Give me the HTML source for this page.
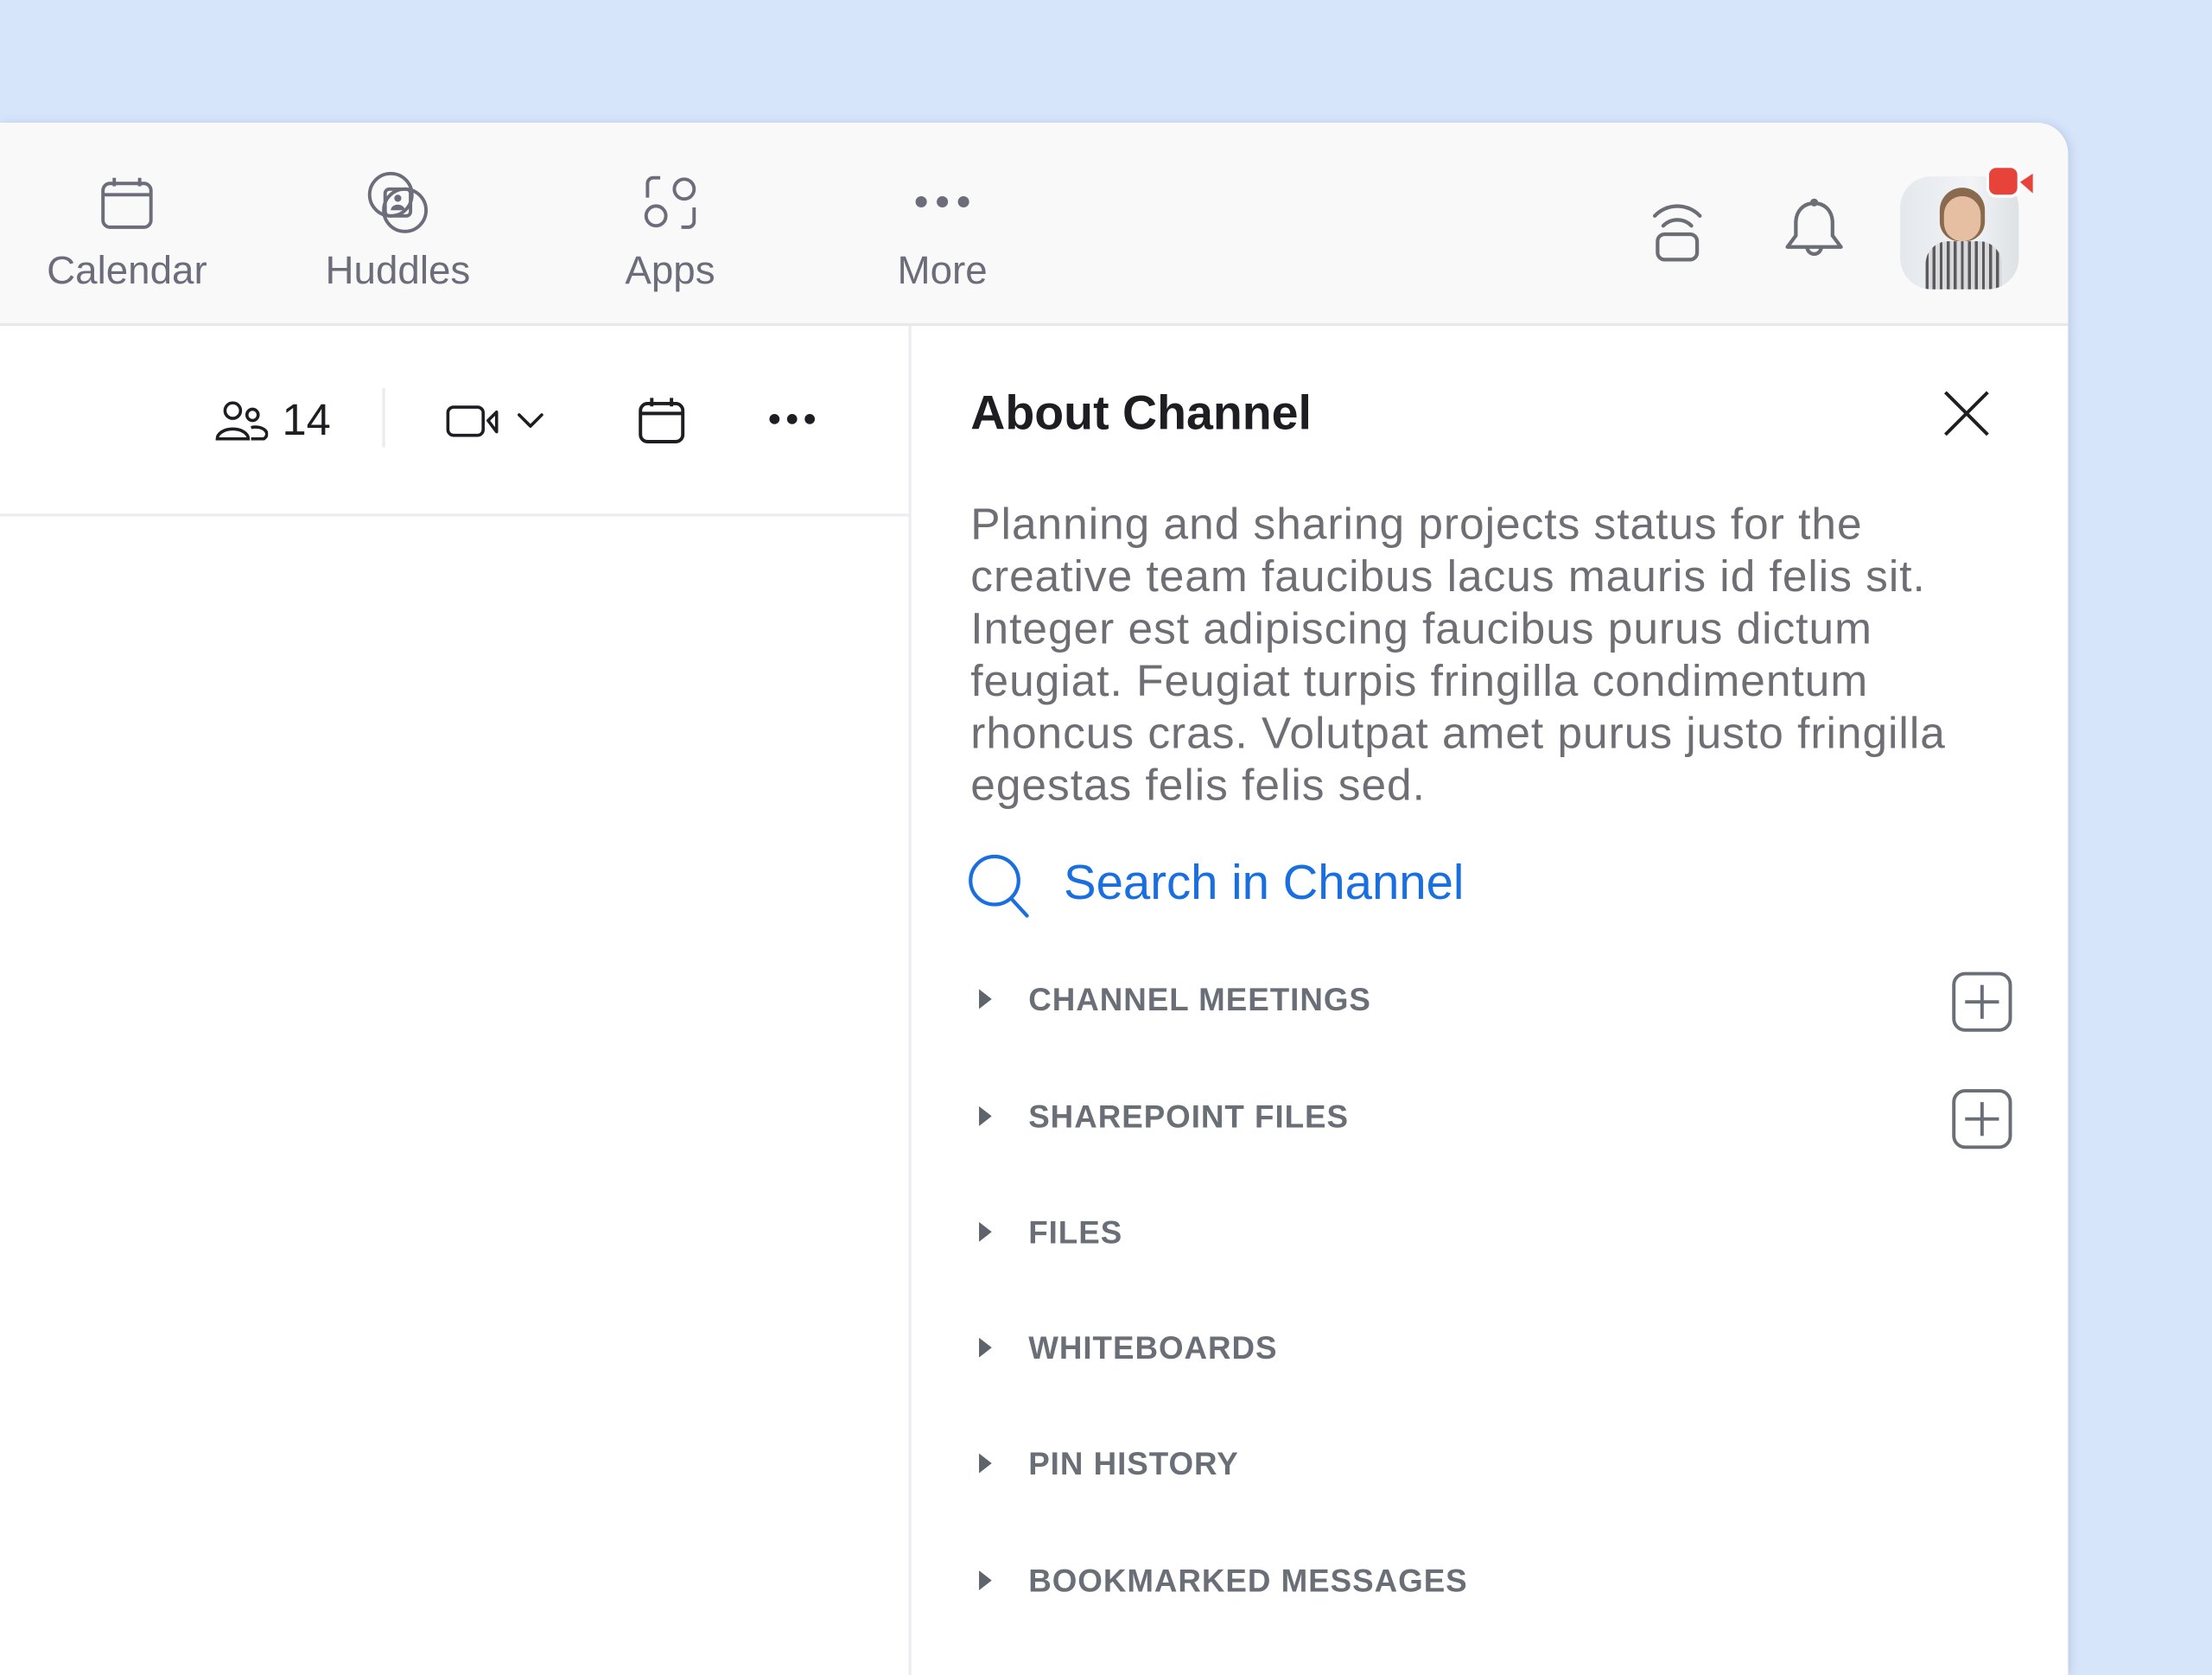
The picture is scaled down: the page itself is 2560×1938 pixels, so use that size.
<!DOCTYPE html>
<html><head><meta charset="utf-8"><style>
html,body{margin:0;padding:0;width:2560px;height:1920px;overflow:hidden;background:#d7e5fb;}
#s{position:absolute;left:0;top:0;width:1568px;height:1176px;transform:scale(1.632653);transform-origin:0 0;font-family:"Liberation Sans",sans-serif;}
.win{position:absolute;left:0;top:87px;width:1466px;height:1100px;background:#fff;border-top-right-radius:22px;overflow:hidden;box-shadow:2px 0 6px rgba(120,140,180,.25);}
.top{position:absolute;left:0;top:0;width:100%;height:142px;background:#f9f9fa;border-bottom:2px solid #e8e8ea;}
.nav{position:absolute;top:89px;width:160px;text-align:center;font-size:28px;color:#6c6c7a;}
.ic{position:absolute;}
.div{position:absolute;left:644px;top:144px;width:2px;height:1000px;background:#ededf0;}
.hl{position:absolute;left:0;top:277px;width:644px;height:2px;background:#ededf0;}
.title{position:absolute;left:688px;top:187px;font-size:34px;font-weight:bold;color:#1d1d22;}
.desc{position:absolute;left:688px;top:266px;font-size:31.5px;line-height:37px;color:#6e6e74;white-space:nowrap;letter-spacing:0.6px;}
.search{position:absolute;left:754px;top:520px;font-size:34.5px;color:#1a6fe0;}
.sec{position:absolute;left:729px;font-size:22.5px;font-weight:bold;color:#6a6e76;letter-spacing:0.6px;}
.tri{position:absolute;left:694px;width:0;height:0;border-left:9px solid #5f636b;border-top:7px solid transparent;border-bottom:7px solid transparent;}
</style></head><body><div id="s">
<div class="win">
 <div class="top">
  <svg class="ic" style="left:70px;top:38px" width="40" height="40" viewBox="0 0 40 40" fill="none" stroke="#6c6c7a" stroke-width="2.4"><rect x="3" y="5" width="34" height="31" rx="5"/><line x1="3" y1="13" x2="37" y2="13"/><line x1="11" y1="1" x2="11" y2="7"/><line x1="29" y1="1" x2="29" y2="7"/></svg>
  <div class="nav" style="left:10px">Calendar</div>
  <svg class="ic" style="left:260px;top:34px" width="46" height="46" viewBox="0 0 46 46" fill="none" stroke="#6c6c7a" stroke-width="2.4"><circle cx="17" cy="17" r="15"/><circle cx="27" cy="28" r="15"/><rect x="13" y="13" width="18" height="19" rx="3"/><circle cx="22" cy="19.5" r="2.5" fill="#6c6c7a" stroke="none"/><path d="M17 28 a5 4 0 0 1 10 0z" fill="#6c6c7a" stroke="none"/></svg>
  <div class="nav" style="left:202px">Huddles</div>
  <svg class="ic" style="left:456px;top:37px" width="40" height="40" viewBox="0 0 40 40" fill="none" stroke="#6c6c7a" stroke-width="2.4"><path d="M3 16 V6 a4 4 0 0 1 4-4 h5"/><circle cx="29" cy="10" r="7"/><circle cx="9" cy="29" r="7"/><path d="M36 23 v10 a4 4 0 0 1 -4 4 h-5"/></svg>
  <div class="nav" style="left:395px">Apps</div>
  <svg class="ic" style="left:648px;top:50px" width="40" height="12" viewBox="0 0 40 12"><circle cx="5" cy="6" r="4" fill="#6c6c7a"/><circle cx="20" cy="6" r="4" fill="#6c6c7a"/><circle cx="35" cy="6" r="4" fill="#6c6c7a"/></svg>
  <div class="nav" style="left:588px">More</div>
  <svg class="ic" style="left:1170px;top:55px" width="38" height="44" viewBox="0 0 38 44" fill="none" stroke="#6b6e75" stroke-width="2.6" stroke-linecap="round"><path d="M3 11 a22 22 0 0 1 32 0"/><path d="M9 18 a14 14 0 0 1 20 0"/><rect x="5" y="24" width="28" height="18" rx="5"/></svg>
  <svg class="ic" style="left:1264px;top:53px" width="44" height="48" viewBox="0 0 44 48" fill="none" stroke="#6b6e75" stroke-width="2.6" stroke-linejoin="round"><path d="M22 4 c-8 0 -13 6 -13 14 v9 l-6 8 h38 l-6 -8 v-9 c0 -8 -5 -14 -13 -14z"/><path d="M17 35 a5 5 0 0 0 10 0"/><circle cx="22" cy="3.5" r="1.5" fill="#6b6e75"/></svg>
  <div style="position:absolute;left:1347px;top:38px;width:84px;height:80px;border-radius:22px;overflow:hidden;background:linear-gradient(90deg,#e4e8ec,#f2f4f6 60%,#dde1e4);">
   <div style="position:absolute;left:28px;top:8px;width:32px;height:38px;border-radius:16px 16px 14px 14px;background:#8a6a4e;"></div>
   <div style="position:absolute;left:31px;top:14px;width:26px;height:32px;border-radius:13px;background:#e6bfa3;"></div>
   <div style="position:absolute;left:18px;top:46px;width:54px;height:40px;border-radius:16px 16px 0 0;background:repeating-linear-gradient(90deg,#5a5a5e 0 2px,#d9d9dc 2px 5px);"></div>
  </div>
  <svg class="ic" style="left:1408px;top:30px" width="36" height="24" viewBox="0 0 36 24"><rect x="1" y="1" width="22" height="21" rx="6" fill="#e8433a" stroke="#fff" stroke-width="2"/><path d="M24 12 l9 -6 v14z" fill="#e8433a"/></svg>
 </div>
 <div class="div"></div>
 <div class="hl"></div>
 <svg class="ic" style="left:152px;top:197px" width="38" height="30" viewBox="0 0 38 30" fill="none" stroke="#1d1d22" stroke-width="2.2"><circle cx="13" cy="7" r="5.5"/><path d="M2 27 a11 7 0 0 1 22 0z"/><circle cx="27" cy="10" r="4"/><path d="M26 19 a8 5 0 0 1 9 8 h-9"/></svg>
 <div style="position:absolute;left:200px;top:193px;font-size:31px;color:#1d1d22;">14</div>
 <div style="position:absolute;left:271px;top:188px;width:2px;height:42px;background:#ececef;"></div>
 <svg class="ic" style="left:316px;top:200px" width="76" height="24" viewBox="0 0 76 24" fill="none" stroke="#1d1d22" stroke-width="2.2" stroke-linejoin="round"><rect x="1.5" y="1.5" width="25" height="20" rx="4"/><path d="M30 11 l6 -6 v14z"/><path d="M52 7 l8 8 l8 -8" stroke-linecap="round"/></svg>
 <svg class="ic" style="left:452px;top:194px" width="34" height="34" viewBox="0 0 34 34" fill="none" stroke="#1d1d22" stroke-width="2.4"><rect x="2" y="5" width="30" height="27" rx="5"/><line x1="2" y1="12" x2="32" y2="12"/><line x1="10" y1="1" x2="10" y2="7"/><line x1="24" y1="1" x2="24" y2="7"/></svg>
 <svg class="ic" style="left:544px;top:204px" width="36" height="12" viewBox="0 0 36 12"><circle cx="5" cy="6" r="3.6" fill="#1d1d22"/><circle cx="17.5" cy="6" r="3.6" fill="#1d1d22"/><circle cx="30" cy="6" r="3.6" fill="#1d1d22"/></svg>
 <div class="title">About Channel</div>
 <svg class="ic" style="left:1378px;top:190px" width="32" height="32" viewBox="0 0 32 32" stroke="#1d1d22" stroke-width="2.4"><line x1="1" y1="1" x2="31" y2="31"/><line x1="31" y1="1" x2="1" y2="31"/></svg>
 <div class="desc">Planning and sharing projects status for the<br>creative team faucibus lacus mauris id felis sit.<br>Integer est adipiscing faucibus purus dictum<br>feugiat. Feugiat turpis fringilla condimentum<br>rhoncus cras. Volutpat amet purus justo fringilla<br>egestas felis felis sed.</div>
 <svg class="ic" style="left:686px;top:518px" width="46" height="46" viewBox="0 0 46 46" fill="none" stroke="#1a6fe0" stroke-width="2.6" stroke-linecap="round"><circle cx="19" cy="19" r="17"/><line x1="31" y1="32" x2="42" y2="44"/></svg>
 <div class="search">Search in Channel</div>
 <div class="tri" style="top:614px"></div><div class="sec" style="top:609px">CHANNEL MEETINGS</div>
 <div class="tri" style="top:697px"></div><div class="sec" style="top:692px">SHAREPOINT FILES</div>
 <div class="tri" style="top:779px"></div><div class="sec" style="top:774px">FILES</div>
 <div class="tri" style="top:861px"></div><div class="sec" style="top:856px">WHITEBOARDS</div>
 <div class="tri" style="top:943px"></div><div class="sec" style="top:938px">PIN HISTORY</div>
 <div class="tri" style="top:1026px"></div><div class="sec" style="top:1021px">BOOKMARKED MESSAGES</div>
 <svg class="ic" style="left:1383px;top:601px" width="44" height="44" viewBox="0 0 44 44" fill="none" stroke="#6a6e76" stroke-width="2.4"><rect x="2" y="2" width="40" height="40" rx="8"/><line x1="22" y1="10" x2="22" y2="34"/><line x1="10" y1="22" x2="34" y2="22"/></svg>
 <svg class="ic" style="left:1383px;top:684px" width="44" height="44" viewBox="0 0 44 44" fill="none" stroke="#6a6e76" stroke-width="2.4"><rect x="2" y="2" width="40" height="40" rx="8"/><line x1="22" y1="10" x2="22" y2="34"/><line x1="10" y1="22" x2="34" y2="22"/></svg>
</div>
</div></body></html>
